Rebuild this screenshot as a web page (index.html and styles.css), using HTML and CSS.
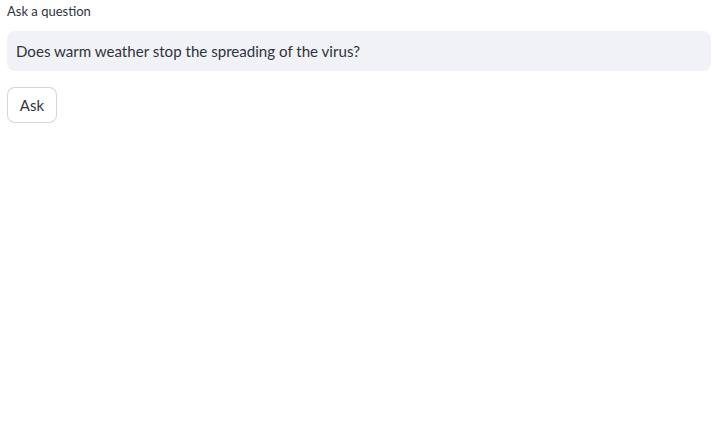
FILE: index.html
```html
<!DOCTYPE html>
<html>
<head>
<meta charset="utf-8">
<link rel="stylesheet" href="styles.css">
</head>
<body>
<main class="app">
  <label class="label" for="q">Ask a question</label>
  <input class="field" id="q" type="text" value="Does warm weather stop the spreading of the virus?">
  <div class="actions">
    <button class="btn" type="button">Ask</button>
  </div>
</main>
</body>
</html>
```

FILE: styles.css
```css
html, body {
  margin: 0;
  padding: 0;
  background: #ffffff;
  font-family: Lato, "Noto Sans", sans-serif;
  color: #31333f;
}
.app {
  display: flex;
  flex-direction: column;
  padding: 2px 3px 0 7px;
}
.label {
  font-size: 13px;
  line-height: 18px;
  height: 18px;
  margin-bottom: 11px;
}
.field {
  box-sizing: border-box;
  width: 704px;
  height: 40px;
  border: none;
  outline: none;
  border-radius: 8px;
  background: #f0f2f6;
  padding: 0 9px;
  font-family: inherit;
  font-size: 15.1px;
  color: #31333f;
}
.actions {
  display: flex;
  margin-top: 16px;
}
.btn {
  box-sizing: border-box;
  height: 36px;
  width: 50px;
  padding: 0;
  background: #ffffff;
  border: 1px solid rgba(49, 51, 63, 0.2);
  border-radius: 8px;
  font-family: inherit;
  font-size: 15px;
  color: #31333f;
}
```
